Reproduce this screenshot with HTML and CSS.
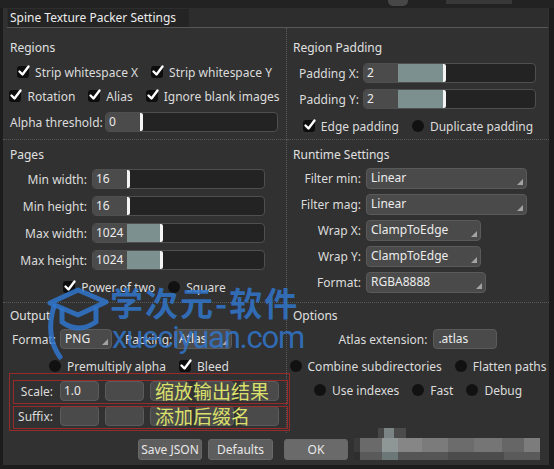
FILE: index.html
```html
<!DOCTYPE html>
<html>
<head>
<meta charset="utf-8">
<link rel="stylesheet" href="styles.css">
</head>
<body>
<div class="app">
  <div class="topstrip"><span class="ts-a"></span><span class="ts-b"></span></div>
  <div class="dialog">
    <div class="titlebar"><span class="title">Spine Texture Packer Settings</span></div>
    <div class="grid">
      <!-- Regions -->
      <section class="cell l b pt12">
        <div class="sec-title">Regions</div>
        <div class="crow mt6">
          <span class="ck"><i class="box on"><svg width="13" height="12" viewBox="0 0 13 12"><path d="M2.5 6.5 L5.5 9.5 L11.5 1.5"/></svg></i>Strip whitespace X</span>
          <span class="ck"><i class="box on"><svg width="13" height="12" viewBox="0 0 13 12"><path d="M2.5 6.5 L5.5 9.5 L11.5 1.5"/></svg></i>Strip whitespace Y</span>
        </div>
        <div class="crow mt4">
          <span class="ck"><i class="box on"><svg width="13" height="12" viewBox="0 0 13 12"><path d="M2.5 6.5 L5.5 9.5 L11.5 1.5"/></svg></i>Rotation</span>
          <span class="ck"><i class="box on"><svg width="13" height="12" viewBox="0 0 13 12"><path d="M2.5 6.5 L5.5 9.5 L11.5 1.5"/></svg></i>Alias</span>
          <span class="ck"><i class="box on"><svg width="13" height="12" viewBox="0 0 13 12"><path d="M2.5 6.5 L5.5 9.5 L11.5 1.5"/></svg></i>Ignore blank images</span>
        </div>
        <div class="frow mt6 pl7">
          <span class="lbl-alpha">Alpha threshold:</span>
          <div class="slider"><span class="val">0</span><span class="knob"></span></div>
        </div>
      </section>

      <!-- Region Padding -->
      <section class="cell r b pt12">
        <div class="sec-title">Region Padding</div>
        <div class="frow mt7 pl6">
          <span class="lbl w66">Padding X:</span>
          <div class="slider"><span class="val">2</span><span class="fill" style="width:45px"></span><span class="knob"></span></div>
        </div>
        <div class="frow mt6 pl6">
          <span class="lbl w66">Padding Y:</span>
          <div class="slider"><span class="val">2</span><span class="fill" style="width:45px"></span><span class="knob"></span></div>
        </div>
        <div class="crow mt7">
          <span class="ck"><i class="box on"><svg width="13" height="12" viewBox="0 0 13 12"><path d="M2.5 6.5 L5.5 9.5 L11.5 1.5"/></svg></i>Edge padding</span>
          <span class="ck"><i class="box off"></i>Duplicate padding</span>
        </div>
      </section>

      <!-- Pages -->
      <section class="cell l b pt7">
        <div class="sec-title">Pages</div>
        <div class="frow mt6 pl7">
          <span class="lbl w77">Min width:</span>
          <div class="slider"><span class="val">16</span><span class="knob"></span></div>
        </div>
        <div class="frow mt7 pl7">
          <span class="lbl w77">Min height:</span>
          <div class="slider"><span class="val">16</span><span class="knob"></span></div>
        </div>
        <div class="frow mt7 pl7">
          <span class="lbl w77">Max width:</span>
          <div class="slider"><span class="val">1024</span><span class="fill" style="width:33px"></span><span class="knob"></span></div>
        </div>
        <div class="frow mt7 pl7">
          <span class="lbl w77">Max height:</span>
          <div class="slider"><span class="val">1024</span><span class="fill" style="width:33px"></span><span class="knob"></span></div>
        </div>
        <div class="crow mt7">
          <span class="ck"><i class="box on"><svg width="13" height="12" viewBox="0 0 13 12"><path d="M2.5 6.5 L5.5 9.5 L11.5 1.5"/></svg></i>Power of two</span>
          <span class="ck"><i class="box off"></i>Square</span>
        </div>
      </section>

      <!-- Runtime Settings -->
      <section class="cell r b pt7">
        <div class="sec-title">Runtime Settings</div>
        <div class="frow h21 mt5 pl6">
          <span class="lbl w68">Filter min:</span>
          <div class="dd w161">Linear</div>
        </div>
        <div class="frow h21 mt5 pl6">
          <span class="lbl w68">Filter mag:</span>
          <div class="dd w161">Linear</div>
        </div>
        <div class="frow h21 mt5 pl6">
          <span class="lbl w68">Wrap X:</span>
          <div class="dd w115">ClampToEdge</div>
        </div>
        <div class="frow h21 mt5 pl6">
          <span class="lbl w68">Wrap Y:</span>
          <div class="dd w115">ClampToEdge</div>
        </div>
        <div class="frow h21 mt5 pl6">
          <span class="lbl w68">Format:</span>
          <div class="dd w120">RGBA8888</div>
        </div>
      </section>

      <!-- Output -->
      <section class="cell l pt5">
        <div class="sec-title">Output</div>
        <div class="frow mt5 pl9">
          <span class="lbl-l w48">Format:</span>
          <div class="dd h20 w52">PNG</div>
          <span class="lbl-l w49 ml13">Packing:</span>
          <div class="dd h20 w58">Atlas</div>
        </div>
        <div class="crow left mt7 pl46">
          <span class="ck"><i class="box off"></i>Premultiply alpha</span>
          <span class="ck"><i class="box on"><svg width="13" height="12" viewBox="0 0 13 12"><path d="M2.5 6.5 L5.5 9.5 L11.5 1.5"/></svg></i>Bleed</span>
        </div>
        <div class="annot mt5">
          <div class="srow">
            <span class="lbl w50">Scale:</span>
            <span class="tf">1.0</span><span class="tf"></span><span class="tf"></span><span class="tf"></span><span class="tf"></span>
            <span class="note">缩放输出结果</span>
          </div>
          <div class="srow">
            <span class="lbl w50">Suffix:</span>
            <span class="tf"></span><span class="tf"></span><span class="tf"></span><span class="tf"></span><span class="tf"></span>
            <span class="note">添加后缀名</span>
          </div>
        </div>
      </section>

      <!-- Options -->
      <section class="cell r pt5">
        <div class="sec-title">Options</div>
        <div class="crow mt5 gap6">
          <span>Atlas extension:</span>
          <span class="tf ext">.atlas</span>
        </div>
        <div class="crow mt7">
          <span class="ck"><i class="box off"></i>Combine subdirectories</span>
          <span class="ck"><i class="box off"></i>Flatten paths</span>
        </div>
        <div class="crow mt4">
          <span class="ck"><i class="box off"></i>Use indexes</span>
          <span class="ck"><i class="box off"></i>Fast</span>
          <span class="ck"><i class="box off"></i>Debug</span>
        </div>
      </section>
    </div>

    <div class="buttons">
      <span class="btn w64">Save JSON</span>
      <span class="btn w65">Defaults</span>
      <span class="btn w64 ml5">OK</span>
      <div class="mosaic">
        <div class="m-top"></div>
        <div class="m-mid"></div>
        <div class="m-bot"></div>
      </div>
    </div>
  </div>

  <div class="watermark">
    <svg class="wm-logo" width="66" height="80" viewBox="44 282 66 80">
      <path d="M50 303 L78 290 L106 302 L78 315 Z"/>
      <path d="M62 310 L62 322 Q78 334 96 322 L96 309"/>
      <path d="M54 306 Q45 336 60 357"/>
    </svg>
    <span class="wm-cn">学次元-软件</span>
    <span class="wm-en">xueciyuan.com</span>
  </div>
</div>
</body>
</html>
```

FILE: styles.css
```css
body {
  margin: 0;
  background: #1c1c1c;
  font-family: "Noto Sans", "DejaVu Sans", sans-serif;
  font-size: 12px;
  color: #dcdcdc;
}

.app {
  position: relative;
  width: 554px;
  height: 469px;
  overflow: hidden;
  background: #1c1c1c;
}

.topstrip {
  height: 8px;
  background: #222222;
  display: flex;
  align-items: flex-start;
}
.ts-a {
  margin-left: 388px;
  width: 20px;
  height: 6px;
  background: #474747;
  border-radius: 0 0 5px 5px;
}
.ts-b {
  margin-left: 38px;
  width: 66px;
  height: 4px;
  background: #383838;
}

.dialog {
  margin-left: 3px;
  width: 546px;
  height: 457px;
  background: #313131;
  display: flex;
  flex-direction: column;
}

.titlebar {
  height: 19px;
  border-bottom: 1px solid #575757;
  margin: 0 1px 0 4px;
  display: flex;
  align-items: center;
  background: #2d2d2d;
}
.title {
  margin-left: 1px;
  padding: 0 13px 0 2px;
  height: 18px;
  line-height: 17px;
  background: #242424;
  color: #ececec;
}

.grid {
  display: grid;
  grid-template-columns: 284px 262px;
  grid-template-rows: 112px 163px 130px;
}
.cell { box-sizing: border-box; }
.cell.l { border-right: 1px dotted #595959; }
.cell.b { border-bottom: 1px dotted #595959; }
.pt12 { padding-top: 12px; }
.pt7 { padding-top: 7px; }
.pt5 { padding-top: 5px; }

.sec-title {
  line-height: 16px;
  padding-left: 7px;
  color: #e0e0e0;
}
.cell.r .sec-title { padding-left: 6px; }

.mt4 { margin-top: 4px; }
.mt5 { margin-top: 5px; }
.mt6 { margin-top: 6px; }
.mt7 { margin-top: 7px; }
.pl6 { padding-left: 6px; }
.pl7 { padding-left: 7px; }
.pl9 { padding-left: 9px; }
.pl46 { padding-left: 46px; }
.ml13 { margin-left: 13px; }
.ml5 { margin-left: 5px; }

/* checkbox rows */
.crow {
  display: flex;
  align-items: center;
  justify-content: center;
  gap: 13px;
  height: 20px;
  white-space: nowrap;
}
.crow.left { justify-content: flex-start; }
.crow.gap6 { gap: 6px; }
.ck {
  display: flex;
  align-items: center;
  gap: 6px;
}
.box {
  position: relative;
  flex: none;
  width: 12px;
  height: 12px;
  border-radius: 3px;
  background: #0d0d0d;
}
.box.off {
  border-radius: 50%;
  background: #111111;
}
.box svg {
  position: absolute;
  left: 0;
  top: -1px;
  overflow: visible;
}
.box svg path {
  fill: none;
  stroke: #ffffff;
  stroke-width: 2.4;
  stroke-linecap: round;
  stroke-linejoin: round;
}

/* form rows */
.frow {
  display: flex;
  align-items: center;
  height: 20px;
  white-space: nowrap;
}
.frow.h21 { height: 21px; }
.lbl {
  flex: none;
  text-align: right;
}
.lbl-l { flex: none; }
.lbl-alpha { flex: none; width: 95px; }
.w66 { width: 66px; margin-right: 4px; }
.w77 { width: 77px; margin-right: 5px; }
.w68 { width: 68px; margin-right: 5px; }
.w48 { width: 48px; }
.w49 { width: 49px; }
.w50 { width: 50px; margin-right: 7px; }

/* slider */
.slider {
  width: 173px;
  height: 20px;
  box-sizing: border-box;
  border: 1px solid #4f4f4f;
  border-radius: 4px;
  background: #232323;
  display: flex;
  overflow: hidden;
}
.slider .val {
  flex: none;
  width: 34px;
  padding-left: 3px;
  box-sizing: border-box;
  background: #4b4b4b;
  line-height: 17px;
  color: #ececec;
}
.slider .fill {
  flex: none;
  background: #7d9090;
}
.slider .knob {
  flex: none;
  width: 3px;
  background: #f4f4f4;
  border-radius: 0 2px 2px 0;
}

/* dropdown */
.dd {
  position: relative;
  flex: none;
  height: 21px;
  box-sizing: border-box;
  border: 1px solid #5a5a5a;
  border-radius: 4px;
  background: #4a4a4a;
  padding-left: 4px;
  line-height: 18px;
  color: #ececec;
}
.dd.h20 { height: 20px; line-height: 17px; }
.dd::after {
  content: "";
  position: absolute;
  right: 3px;
  bottom: 3px;
  border-left: 6px solid transparent;
  border-bottom: 6px solid #a3a3a3;
}
.w161 { width: 161px; }
.w115 { width: 115px; }
.w120 { width: 120px; }
.w52 { width: 52px; }
.w58 { width: 58px; }

/* text fields */
.tf {
  flex: none;
  width: 39px;
  height: 20px;
  box-sizing: border-box;
  border: 1px solid #5b5b5b;
  border-radius: 4px;
  background: #4a4a4a;
  padding-left: 3px;
  line-height: 17px;
  color: #ececec;
}
.tf.ext {
  width: 64px;
  padding-left: 4px;
}

/* annotated scale / suffix block */
.annot {
  position: relative;
  display: flex;
  flex-direction: column;
  gap: 5px;
}
.annot::before {
  content: "";
  position: absolute;
  left: 6px;
  right: -4px;
  top: -8px;
  bottom: -5px;
  border: 1px solid rgba(170, 40, 40, 0.85);
  pointer-events: none;
}
.srow {
  position: relative;
  display: flex;
  align-items: center;
  gap: 6px;
  height: 20px;
  white-space: nowrap;
}
.srow .w50 { margin-right: 1px; }
.srow::after {
  content: "";
  position: absolute;
  left: 10px;
  right: -2px;
  top: -1px;
  bottom: -3px;
  border: 1px solid rgba(170, 40, 40, 0.85);
  pointer-events: none;
}
.srow + .srow::after { top: 0; }
.note {
  position: absolute;
  left: 152px;
  top: 0;
  line-height: 20px;
  font-family: "Noto Sans CJK SC", sans-serif;
  font-size: 19px;
  color: #dbe06a;
}

/* buttons */
.buttons {
  display: flex;
  align-items: flex-end;
  gap: 6px;
  margin-top: -5px;
  padding-left: 135px;
  height: 32px;
}
.btn {
  flex: none;
  height: 21px;
  box-sizing: border-box;
  border: 1px solid #686868;
  border-radius: 3px;
  background: #5d5d5d;
  line-height: 19px;
  text-align: center;
  color: #e8e8e8;
}
.w64 { width: 64px; }
.w65 { width: 65px; }
.buttons .btn.ml5 { margin-left: 5px; background: #6a6a6a; }

.mosaic {
  flex: none;
  width: 186px;
  height: 32px;
  display: flex;
  flex-direction: column;
}
.m-top {
  height: 10px;
  background: linear-gradient(to right, transparent 0 24px, #474747 24px 30px, #7b8484 30px 40px, #4b4b4b 40px 52px, transparent 52px);
}
.m-mid {
  height: 14px;
  background: linear-gradient(to right, #3a3a3a 0 6px, #6a6a6a 6px 28px, #8e9696 28px 44px, #868686 44px 68px, #7b7b7b 68px 94px, #6c6c6c 94px 120px, #757575 120px 148px, #666666 148px 170px, #7c7c7c 170px 186px);
}
.m-bot {
  height: 8px;
  background: linear-gradient(to right, #2e2e2e 0 6px, #5a5a5a 6px 28px, #6c7878 28px 44px, #555555 44px 94px, #4c4c4c 94px 150px, #5a5a5a 150px 186px);
}

/* watermark overlay */
.watermark {
  position: absolute;
  left: 0;
  top: 0;
  width: 554px;
  height: 469px;
  pointer-events: none;
  color: rgba(48, 118, 205, 0.85);
}
.wm-logo {
  position: absolute;
  left: 44px;
  top: 282px;
  overflow: visible;
}
.wm-logo path {
  fill: none;
  stroke: rgba(48, 118, 205, 0.85);
  stroke-width: 5;
  stroke-linecap: round;
  stroke-linejoin: round;
}
.wm-cn {
  position: absolute;
  left: 110px;
  top: 286px;
  font-family: "Noto Sans CJK SC", sans-serif;
  font-weight: bold;
  font-size: 33px;
  line-height: 33px;
  letter-spacing: 2px;
  white-space: nowrap;
}
.wm-en {
  position: absolute;
  left: 112px;
  top: 322px;
  font-family: Roboto, sans-serif;
  font-size: 31px;
  line-height: 31px;
  letter-spacing: -1.2px;
  white-space: nowrap;
}
```
